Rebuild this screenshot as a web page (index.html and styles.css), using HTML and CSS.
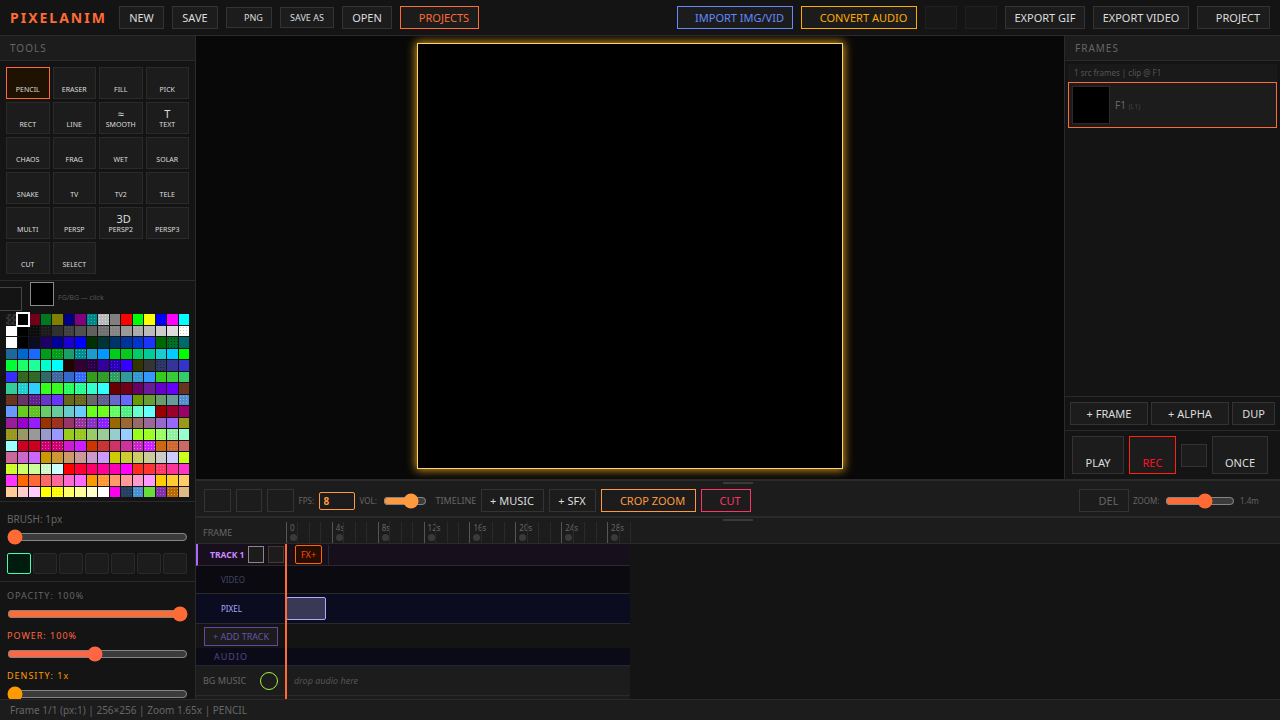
FILE: index.html
```html
<!DOCTYPE html>
<html lang="en">
<head>
    <meta charset="UTF-8">
    <meta name="viewport" content="width=device-width, initial-scale=1.0">
    <title>PixelAnim</title>
    <link rel="stylesheet" href="styles.css">
</head>
<body>
    <header class="topbar">
        <div class="logo">PIXELANIM</div>
        <button class="btn w45">NEW</button>
        <button class="btn w46">SAVE</button>
        <button class="btn small w46 icon-gap">PNG</button>
        <button class="btn small w54">SAVE AS</button>
        <button class="btn w50">OPEN</button>
        <button class="btn orange w79 icon-gap">PROJECTS</button>
        <div class="spacer"></div>
        <button class="btn blue w116 icon-gap">IMPORT IMG/VID</button>
        <button class="btn amber w116 icon-gap">CONVERT AUDIO</button>
        <button class="btn w32" disabled></button>
        <button class="btn w32" disabled></button>
        <button class="btn w80">EXPORT GIF</button>
        <button class="btn w96">EXPORT VIDEO</button>
        <button class="btn w73 icon-gap">PROJECT</button>
    </header>

    <div class="main">
        <aside class="sidebar">
            <div class="panel-title">TOOLS</div>
            <div class="tools">
                <button class="tool active">PENCIL</button>
                <button class="tool">ERASER</button>
                <button class="tool">FILL</button>
                <button class="tool">PICK</button>
                <button class="tool">RECT</button>
                <button class="tool">LINE</button>
                <button class="tool"><span class="glyph">≈</span>SMOOTH</button>
                <button class="tool"><span class="glyph">T</span>TEXT</button>
                <button class="tool">CHAOS</button>
                <button class="tool">FRAG</button>
                <button class="tool">WET</button>
                <button class="tool">SOLAR</button>
                <button class="tool">SNAKE</button>
                <button class="tool">TV</button>
                <button class="tool">TV2</button>
                <button class="tool">TELE</button>
                <button class="tool">MULTI</button>
                <button class="tool">PERSP</button>
                <button class="tool"><span class="glyph shifted">3D</span>PERSP2</button>
                <button class="tool">PERSP3</button>
                <button class="tool">CUT</button>
                <button class="tool">SELECT</button>
            </div>
            <div class="colors">
                <div class="fgbg">
                    <div class="bg-swatch"></div>
                    <div class="fg-swatch"></div>
                    <span class="fgbg-label">FG/BG — click</span>
                </div>
                <div class="palette" id="palette"></div>
            </div>
            <div class="brush">
                <div class="brush-label">BRUSH: 1px</div>
                <input class="slider" type="range" min="1" max="64" value="1">
                <div class="shapes">
                    <button class="shape active"></button>
                    <button class="shape"></button>
                    <button class="shape"></button>
                    <button class="shape"></button>
                    <button class="shape"></button>
                    <button class="shape"></button>
                    <button class="shape"></button>
                </div>
            </div>
            <div class="params">
                <div class="param-label">OPACITY: 100%</div>
                <input class="slider" type="range" min="0" max="100" value="100">
                <div class="param-label power">POWER: 100%</div>
                <input class="slider power" type="range" min="10" max="200" value="102">
                <div class="param-label density">DENSITY: 1x</div>
                <input class="slider density" type="range" min="1" max="10" value="1">
            </div>
        </aside>

        <div class="content">
            <div class="upper">
                <div class="stage">
                    <div class="canvas"></div>
                </div>
                <aside class="frames">
                    <div class="panel-title">FRAMES</div>
                    <div class="frame-list">
                        <div class="frame-info">1 src frames | clip @ F1</div>
                        <div class="frame">
                            <div class="thumb"></div>
                            <span>F1 <small>(L1)</small></span>
                        </div>
                    </div>
                    <div class="frame-actions">
                        <button class="btn grow">+ FRAME</button>
                        <button class="btn grow">+ ALPHA</button>
                        <button class="btn w43">DUP</button>
                    </div>
                    <div class="playback">
                        <button class="btn tall w52">PLAY</button>
                        <button class="btn tall red w47">REC</button>
                        <button class="btn w26"></button>
                        <button class="btn tall w56">ONCE</button>
                    </div>
                </aside>
            </div>

            <div class="timebar">
                <div class="handle"></div>
                <button class="btn w27"></button>
                <button class="btn w27"></button>
                <button class="btn w27"></button>
                <label class="lbl fps-label">FPS:</label>
                <input class="fps" type="text" value="8">
                <label class="lbl vol-label">VOL:</label>
                <input class="slider vol" type="range" min="0" max="100" value="74">
                <span class="lbl timeline-label">TIMELINE</span>
                <button class="btn w63">+ MUSIC</button>
                <button class="btn w47">+ SFX</button>
                <button class="btn crop w95 icon-gap">CROP ZOOM</button>
                <button class="btn pink w50 icon-gap">CUT</button>
                <div class="spacer"></div>
                <button class="btn dim w50 icon-gap">DEL</button>
                <label class="lbl zoom-label">ZOOM:</label>
                <input class="slider zoom" type="range" min="0" max="100" value="59">
                <span class="lbl zoom-value">1.4m</span>
            </div>

            <div class="timeline">
                <div class="handle"></div>
                <div class="ruler-row">
                    <div class="row-label">FRAME</div>
                    <div class="ruler" id="ruler"></div>
                </div>
                <div class="tracks">
                    <div class="track head">
                        <div class="head-label">TRACK 1<i class="box"></i><i class="box olive"></i></div>
                        <button class="fx">FX+</button>
                        <i class="sep"></i>
                    </div>
                    <div class="track video"><div class="row-label sub">VIDEO</div></div>
                    <div class="track pixel">
                        <div class="row-label sub">PIXEL</div>
                        <div class="clip"></div>
                    </div>
                    <div class="track add"><button class="add-track">+ ADD TRACK</button></div>
                    <div class="track audio">AUDIO</div>
                    <div class="track music">
                        <div class="row-label">BG MUSIC<i class="ring"></i></div>
                        <em>drop audio here</em>
                    </div>
                    <div class="track"></div>
                    <div class="playhead"></div>
                </div>
            </div>
        </div>
    </div>

    <footer class="status">Frame 1/1 (px:1) | 256×256 | Zoom 1.65x | PENCIL</footer>
    <script src="app.js"></script>
</body>
</html>
```
FILE: app.js
```js
// 16 colors per row, "base/dot" is a dithered swatch
const rows = [
    '222/3a3a3a 000 700018 007820 808000 000080 800080 008888/20b0b0 b8b8b8/ddd 808080 f00 0f0 ff0 00f f0f 0ff',
    'fff 000 0c0c0c/222 1c1c1c/303030 303030 404040/555 505050 606060 707070/888 848484/999 999 aaa/bbb bbb ccc ddd fff/ccc',
    'fff 000 0c0c20 200068 000099 1c00cc 00f 003000 003434 003468 003399 0034cc 1c34ff 006800 007020/003030 006868',
    '1c6899 0068cc 1c68ff 009c1c 009c1c/30b830 1c9c68 008c90/30c0c0 1c9ccc 0099ff 00cc1c 00cc1c/30aa40 00cc68 00cc99 1ccccc 00ccff 0f0',
    '00ff34 1cff68 1cff99 00ffcc 0ff 200400 340034 280048/680070 340099 2800b8/6810e0 3400ff 343400 343434 303868/182048 343499 3434cc',
    '3030ff/7010ff 346820 346820/306868 346868 4068a0/8070a0 3468cc 3468ff/60a0ff 349c1c 349c20/309c70 309c60/60c090 349999 3498cc/40b0f0 3499ff 34cc1c 34cc34/60c050 34cc68',
    '34cc99 20cccc/60e0e0 34ccff 34ff1c 34ff20/60e010 20ff60/70ff70 20ff90/70ffc0 34ffcc 34ffff 680000 700018 680068 681c99 6800cc 6800ff 683420',
    '683420/803828 683468 602090/8840c0 6834cc 6834ff 68681c 686820/808010 686868 606090/7870a0 6868cc 6868ff 689c00 689c34 689c68 689c9c 5090d0/80b8e0',
    '6899ff 68cc20 60c020/80d850 68cc68 68cc99 68cccc 68ccff 68ff1c 68ff20/90ff20 60ff60/a0ff90 50ee80/80ffb0 68ffcc 68ffff 990000 99002c 990068',
    '991c99 9900cc 991cff 993400 983420/cc2020 993468 983498/d070d0 8830c0/b060e0 8820ff/c060ff 996800 996834 996868 996899 9968cc 9968ff 99991c',
    '989820/b0a030 999968 999 9999cc 9999ff 99cc1c 98c820/b0d840 99cc68 99cc99 99cccc 99ccff 99ff1c 98ff20/c0ff50 98ff60/d0ff90 90f0a0/b8ffd0 99ffcc',
    '99ffff cc0020 cc001c cc0070/ee50a0 cc0070/ff50a8 cc1ccc cc1cff cc3400 cc3434 cc3468 cc3499 cc20cc/ee80ee cc20ff/f080ff cc6810 cc6830/e08050 cc6868',
    'cc6899 cc68cc cc68ff cc9900 cc9934 cc9968 cc9999 cc99cc cc99ff cccc00 cccc34 cccc68 cccc99 cccccc ccccff ccff1c',
    'ccff20/e0ff80 ccff68 ccff99 ccf8c8/f8fff8 ccffff ff0000 ff0034 ff0068 ff0099 ff00b0/d000f0 f0f ff2c1c ff3434 ff3868/ff70a0 ff3499 ff34cc',
    'ff34ff ff6800 ff6834 ff6868 ff6899 ff68cc ff68ff ff9900 ff9834/ffb060 ff9968 ff9999 ff99cc ff99ff ffcc00 ffcc34 ffcc68',
    'ffcc99 ffcccc ffccff ffff00 ffff10/ffd800 ffff68 ffff99 ffffcc fff f0e 2c3e60/106080 4890d0/70b0e0 68dd38 8030a8/b060d0 b86808/e0a030 deb887'
];

const palette = document.getElementById('palette');
rows.join(' ').split(' ').forEach((entry, i) => {
    const [base, dot] = entry.split('/');
    const el = document.createElement('div');
    el.className = 'swatch' + (dot ? ' dither' : '') + (i === 1 ? ' selected' : '');
    el.style.setProperty('--base', '#' + base);
    if (dot) el.style.setProperty('--dot', '#' + dot);
    palette.appendChild(el);
});
palette.firstChild.classList.add('alpha');

// timeline ruler, one tick per second
const ruler = document.getElementById('ruler');
for (let s = 0; s < 30; s++) {
    const tick = document.createElement('div');
    tick.className = 'tick';
    if (s % 4 === 0) {
        tick.classList.add('major');
        tick.innerHTML = '<span>' + (s ? s + 's' : '0') + '</span><i></i>';
    }
    ruler.appendChild(tick);
}
```
FILE: styles.css
```css
* {
    margin: 0;
    padding: 0;
    box-sizing: border-box;
}

body {
    width: 100vw;
    height: 100vh;
    display: flex;
    flex-direction: column;
    overflow: hidden;
    background: #141414;
    color: #ddd;
    color-scheme: dark;
    font-family: 'Noto Sans', sans-serif;
    font-size: 11px;
}

button, input {
    font-family: inherit;
}

.topbar {
    height: 36px;
    flex: none;
    display: flex;
    align-items: center;
    gap: 8px;
    padding: 0 10px;
    border-bottom: 1px solid #2a2a2a;
}

.logo {
    width: 101px;
    color: #ff6b35;
    font-size: 14px;
    font-weight: bold;
    letter-spacing: 2px;
}

.spacer {
    flex: 1;
}

.btn {
    height: 23px;
    flex: none;
    background: #1c1c1c;
    border: 1px solid #333;
    color: #ddd;
    font-size: 11px;
    white-space: nowrap;
}

.btn.small { height: 21px; font-size: 9px; }
.btn.icon-gap { padding-left: 9px; }
.btn:disabled { opacity: 0.4; }
.btn.grow { flex: 1; }
.btn.tall { height: 38px; padding-top: 15px; }
.btn.orange { border-color: #ff6b35; color: #ff6b35; }
.btn.blue { border-color: #6688ff; color: #6688ff; }
.btn.amber { border-color: #ffaa00; color: #ffaa00; }
.btn.red { border-color: #ff2211; color: #ff1122; }
.btn.crop { border-color: #ff9940; color: #ff9940; }
.btn.pink { border-color: #ff3366; color: #ff3366; }
.btn.dim { color: #666; }

.w26 { width: 26px; }
.w27 { width: 26.5px; }
.w32 { width: 32px; }
.w43 { width: 43px; }
.w45 { width: 45px; }
.w46 { width: 46px; }
.w47 { width: 47px; }
.w50 { width: 50px; }
.w52 { width: 52px; }
.w54 { width: 54px; }
.w56 { width: 56px; }
.w63 { width: 63px; }
.w73 { width: 73px; }
.w79 { width: 79px; }
.w80 { width: 80px; }
.w95 { width: 95px; }
.w96 { width: 96px; }
.w116 { width: 116px; }

.main {
    flex: 1;
    min-height: 0;
    display: flex;
}

/* left panel */
.sidebar {
    width: 196px;
    flex: none;
    overflow: hidden;
    border-right: 1px solid #2a2a2a;
}

.panel-title {
    height: 25px;
    line-height: 24px;
    padding: 0 10px;
    background: #1c1c1c;
    border-bottom: 1px solid #2a2a2a;
    color: #666;
    font-size: 10px;
    letter-spacing: 1px;
}

.tools {
    display: grid;
    grid-template-columns: repeat(4, 1fr);
    grid-auto-rows: 32px;
    gap: 3px;
    padding: 6px;
    border-bottom: 1px solid #2a2a2a;
}

.tool {
    display: flex;
    flex-direction: column;
    align-items: center;
    justify-content: flex-end;
    padding-bottom: 3px;
    background: #1c1c1c;
    border: 1px solid #2a2a2a;
    color: #ddd;
    font-size: 7px;
    line-height: 10px;
}

.tool.active {
    background: #1f1200;
    border-color: #ff6b35;
}

.glyph {
    font-size: 11px;
    line-height: 13px;
}

.glyph.shifted {
    padding-left: 6px;
}

.colors {
    height: 221px;
    padding: 0 6px;
    border-bottom: 1px solid #2a2a2a;
}

.fgbg {
    height: 33px;
    display: flex;
    gap: 8px;
    margin-left: -8px;
}

.bg-swatch {
    width: 24px;
    height: 24px;
    margin-top: 6px;
    border: 1px solid #444;
}

.fg-swatch {
    width: 24px;
    height: 24px;
    margin-top: 1px;
    background: #000;
    border: 1px solid #888;
}

.fgbg-label {
    margin: 12px 0 0 -4px;
    color: #555;
    font-size: 7px;
}

.palette {
    display: grid;
    grid-template-columns: repeat(16, 1fr);
    gap: 1px;
}

.swatch {
    aspect-ratio: 1;
    background: var(--base);
}

.swatch.dither {
    background-image: radial-gradient(circle, var(--dot) 0.7px, transparent 0.8px);
    background-size: 3px 3px;
}

.swatch.alpha {
    background: repeating-conic-gradient(#333 0 25%, #1c1c1c 0 50%) 0 0 / 5px 5px;
}

.swatch.selected {
    outline: 2px solid #fff;
    outline-offset: -0.5px;
    z-index: 1;
}

.brush {
    height: 80px;
    padding: 10px 7px 0;
    border-bottom: 1px solid #2a2a2a;
}

.brush-label {
    color: #666;
    font-size: 10px;
    line-height: 14px;
}

.slider {
    display: block;
    width: 181px;
    height: 16px;
    accent-color: #ff6b35;
}

.brush .slider {
    margin-top: 3px;
}

.shapes {
    display: flex;
    gap: 2px;
    margin-top: 8px;
}

.shape {
    width: 24px;
    height: 21px;
    background: #1c1c1c;
    border: 1px solid #2a2a2a;
    border-radius: 2px;
}

.shape.active {
    background: #001c10;
    border-color: #44ffaa;
}

.params {
    padding: 7px 7px 0;
}

.param-label {
    color: #666;
    font-size: 9px;
    line-height: 14px;
    letter-spacing: 1px;
}

.params .slider {
    margin: 3px 0 7px;
}

.param-label.power { color: #ff6644; }
.param-label.density { color: #ff9900; }
.slider.power { accent-color: #ff6644; }
.slider.density { accent-color: #ff9900; }

/* canvas and frames */
.content {
    flex: 1;
    min-width: 0;
    display: flex;
    flex-direction: column;
}

.upper {
    height: 443px;
    flex: none;
    display: flex;
}

.stage {
    flex: 1;
    display: flex;
    justify-content: center;
    padding-top: 7px;
    background: #080808;
    overflow: hidden;
}

.canvas {
    width: 426px;
    height: 426px;
    background: #000;
    border: 1px solid #ffd470;
    box-shadow: 0 0 9px 1px #d69a20;
}

.frames {
    width: 216px;
    display: flex;
    flex-direction: column;
    border-left: 1px solid #2a2a2a;
}

.frame-list {
    flex: 1;
    padding: 3px;
}

.frame-info {
    height: 18px;
    line-height: 18px;
    padding: 0 6px;
    background: #191919;
    color: #555;
    font-size: 8px;
}

.frame {
    height: 46px;
    display: flex;
    align-items: center;
    gap: 5px;
    padding: 0 3px;
    background: #1c1c1c;
    border: 1px solid #ff6b35;
    color: #666;
    font-size: 10px;
}

.frame small {
    color: #444;
    font-size: 7px;
}

.thumb {
    width: 38px;
    height: 38px;
    background: #000;
    border: 1px solid #2a2a2a;
}

.frame-actions {
    display: flex;
    gap: 3px;
    padding: 5px;
    border-top: 1px solid #2a2a2a;
}

.playback {
    height: 49px;
    display: flex;
    align-items: center;
    gap: 5px;
    padding: 0 7px;
    border-top: 1px solid #2a2a2a;
}

/* timeline */
.timebar {
    position: relative;
    height: 37px;
    flex: none;
    display: flex;
    align-items: center;
    gap: 5px;
    padding: 4px 21px 0 8px;
    background: #1c1c1c;
    border-top: 2px solid #2a2a2a;
}

.handle {
    position: absolute;
    top: 1px;
    left: 50%;
    width: 30px;
    height: 2px;
    margin-left: -15px;
    background: #3a3a3a;
}

.lbl {
    flex: none;
    color: #666;
    font-size: 8px;
}

.fps-label { width: 15px; }
.vol-label { width: 18px; }
.timeline-label { width: 40px; font-size: 9px; margin-left: 4px; }
.zoom-label { width: 27px; margin-left: -1px; }
.zoom-value { width: 19px; }

.fps {
    width: 36px;
    height: 18px;
    padding-left: 4px;
    background: #1c1c1c;
    border: 1px solid #ff9940;
    border-radius: 2px;
    color: #ff9940;
    font-size: 10px;
    font-weight: bold;
}

.slider.vol {
    width: 44px;
    accent-color: #ff9940;
}

.slider.zoom {
    width: 70px;
}

.timeline {
    position: relative;
    flex: 1;
    min-height: 0;
    overflow: hidden;
    border-top: 2px solid #2a2a2a;
}

.ruler-row {
    height: 26px;
    display: flex;
    padding-top: 4px;
    background: #1c1c1c;
    border-bottom: 1px solid #2a2a2a;
}

.row-label {
    width: 90px;
    flex: none;
    display: flex;
    align-items: center;
    padding-left: 7px;
    color: #666;
    font-size: 9px;
}

.row-label.sub {
    padding-left: 25px;
    font-size: 8px;
}

.ruler {
    width: 345px;
    display: grid;
    grid-template-columns: repeat(30, 1fr);
    border-right: 1px solid #2a2a2a;
}

.tick {
    min-width: 0;
    border-left: 1px solid #2a2a2a;
}

.tick.major {
    border-color: #555;
}

.tick span {
    display: block;
    padding-left: 3px;
    color: #666;
    font-size: 8px;
    line-height: 11px;
    white-space: nowrap;
}

.tick i {
    display: block;
    width: 7px;
    height: 7px;
    margin: 1px 0 0 3px;
    background: #3a3a3a;
    border-radius: 50%;
}

.tracks {
    position: relative;
    width: 434px;
}

.track {
    display: flex;
    height: 30px;
    background: #1c1c1c;
    border-bottom: 1px solid #2a2a2a;
}

.track.head {
    height: 22px;
    align-items: center;
    background: #170f1c;
    border-left: 2px solid #aa66ff;
}

.head-label {
    width: 88px;
    flex: none;
    display: flex;
    align-items: center;
    padding-left: 12px;
    overflow: hidden;
    color: #cc88ff;
    font-size: 8.5px;
    font-weight: bold;
    white-space: nowrap;
}

.box {
    width: 16px;
    height: 17px;
    flex: none;
    margin-left: 4px;
    background: #1c1c1c;
    border: 1px solid #888;
}

.box.olive {
    border-color: #443c28;
}

.fx {
    width: 27px;
    height: 19px;
    margin-left: 9px;
    background: #250e00;
    border: 1px solid #ff6600;
    border-radius: 2px;
    color: #ff4411;
    font-size: 9px;
}

.sep {
    height: 20px;
    margin-left: 6px;
    border-left: 1px solid #2a2a2a;
}

.track.video { height: 28px; background: #0a0a10; }
.track.video .row-label { color: #444466; }
.track.pixel { background: #0b0c20; }
.track.pixel .row-label { color: #aaaaff; }

.clip {
    width: 40px;
    height: 23px;
    margin-top: 3px;
    background: #3a3854;
    border: 1px solid #aaaaff;
    border-radius: 2px;
}

.track.add {
    height: 24px;
    padding: 3px 8px;
    background: none;
    border: none;
}

.add-track {
    width: 74px;
    height: 19px;
    background: #1c1c1c;
    border: 1px solid #6644aa;
    color: #6655aa;
    font-size: 9px;
}

.track.audio {
    height: 18px;
    align-items: center;
    padding-left: 18px;
    background: #0b0b18;
    border-color: #25253a;
    color: #554488;
    font-size: 9px;
    letter-spacing: 1px;
}

.track.music {
    align-items: center;
    color: #555;
    font-size: 9px;
}

.track.music em {
    margin-left: 8px;
}

.ring {
    width: 18px;
    height: 18px;
    margin-left: 14px;
    border: 1px solid #aaee44;
    border-radius: 50%;
}

.playhead {
    position: absolute;
    top: 0;
    bottom: 0;
    left: 89px;
    width: 2px;
    background: #ff6b35;
}

.status {
    height: 21px;
    flex: none;
    padding-left: 10px;
    background: #1c1c1c;
    border-top: 1px solid #2a2a2a;
    color: #666;
    font-size: 10px;
    line-height: 21px;
}
```
